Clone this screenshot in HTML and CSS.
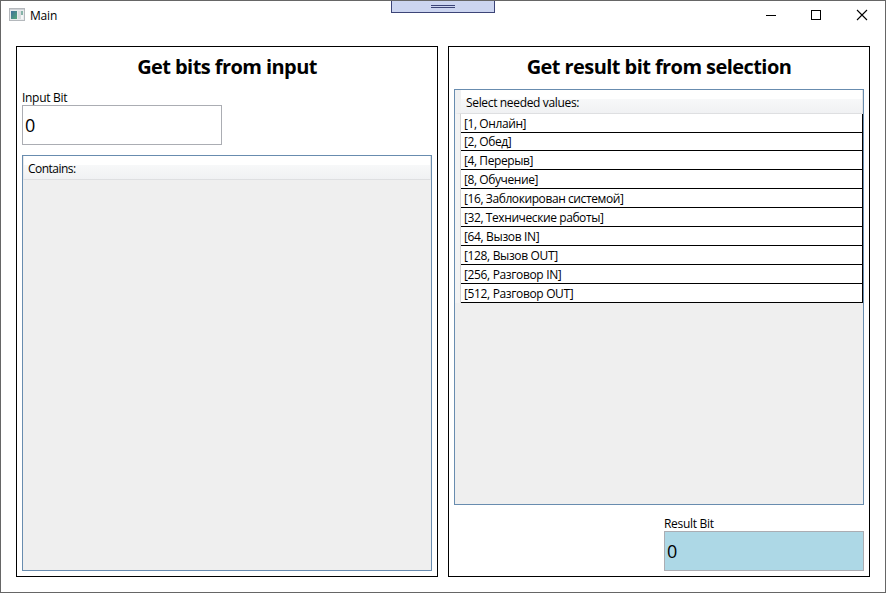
FILE: index.html
```html
<!DOCTYPE html>
<html lang="en">
<head>
<meta charset="utf-8">
<title>Main</title>
<link rel="stylesheet" href="styles.css">
</head>
<body>
<div class="window">
  <div class="debug-bar"><span class="grip"></span></div>
  <header class="titlebar">
    <svg class="app-icon" width="16" height="14" viewBox="0 0 16 14" shape-rendering="crispEdges">
      <defs><linearGradient id="screen" x1="0" y1="0" x2="1" y2="1"><stop offset="0" stop-color="#3f6f9c"/><stop offset="1" stop-color="#55a878"/></linearGradient></defs>
      <rect x=".5" y=".5" width="15" height="12" fill="#e9ebed" stroke="#b4b8bc"/>
      <rect x="1" y="1" width="14" height="1" fill="#cfd2d6"/>
      <rect x="2" y="3" width="6" height="8" fill="url(#screen)"/>
      <rect x="9" y="3" width="3" height="8" fill="#d9dcdf"/>
      <rect x="12" y="3" width="2" height="4" fill="#86b3a8"/>
      <rect x="12" y="7" width="2" height="4" fill="#f5f6f7"/>
    </svg>
    <span class="title">Main</span>
    <div class="controls">
      <svg width="46" height="28" viewBox="0 0 46 28"><path d="M18 14.500h10" stroke="#000" shape-rendering="crispEdges"/></svg>
      <svg width="46" height="28" viewBox="0 0 46 28"><path d="M17.500 9.500h9v9h-9z" fill="none" stroke="#000" shape-rendering="crispEdges"/></svg>
      <svg width="46" height="28" viewBox="0 0 46 28"><path d="M17 9l10 10M27 9l-10 10" fill="none" stroke="#000" stroke-width="1.1"/></svg>
    </div>
  </header>
  <main class="panels">
    <section class="panel">
      <h1><span class="heading-input">Get bits from input</span></h1>
      <label class="field">
        <span class="caption">Input Bit</span>
        <span class="box">0</span>
      </label>
      <div class="grid grid-contains">
        <div class="grid-header"><span class="text-contains">Contains:</span></div>
      </div>
    </section>
    <section class="panel">
      <h1><span class="heading-result">Get result bit from selection</span></h1>
      <div class="grid grid-values">
        <div class="grid-header with-rows"><span class="text-select">Select needed values:</span></div>
        <div class="row"><span>[1, Онлайн]</span></div>
        <div class="row short"><span>[2, Обед]</span></div>
        <div class="row"><span>[4, Перерыв]</span></div>
        <div class="row"><span>[8, Обучение]</span></div>
        <div class="row"><span>[16, Заблокирован системой]</span></div>
        <div class="row"><span>[32, Технические работы]</span></div>
        <div class="row mixed"><span>[64, Вызов IN]</span></div>
        <div class="row mixed"><span>[128, Вызов OUT]</span></div>
        <div class="row mixed"><span>[256, Разговор IN]</span></div>
        <div class="row mixed"><span>[512, Разговор OUT]</span></div>
      </div>
      <label class="field result">
        <span class="caption">Result Bit</span>
        <span class="box">0</span>
      </label>
    </section>
  </main>
</div>
</body>
</html>
```
FILE: styles.css
```css
* { box-sizing: border-box; }
body {
  margin: 0;
  font: 12px/16px "Segoe UI", "Open Sans", "Noto Sans", sans-serif;
  color: #000;
}
.window {
  position: relative;
  width: 886px;
  height: 593px;
  border: 1px solid #666;
  background: #fff;
  overflow: hidden;
}
.debug-bar {
  position: absolute;
  top: -1px;
  left: 390px;
  width: 104px;
  height: 14px;
  border: 1px solid #3c4477;
  background: #ccd5f0;
  display: flex;
  justify-content: center;
  padding-top: 5px;
}
.grip {
  width: 24px;
  height: 3px;
  border-top: 1px solid #3c4477;
  border-bottom: 1px solid #3c4477;
}
.debug-bar { height: 13px; padding-top: 4px; }
.titlebar { display: flex; height: 45px; padding-left: 8px; }
.app-icon { margin-top: 7px; }
.title { margin: 7px 0 0 5px; letter-spacing: -.2px; }
.controls { display: flex; margin-left: auto; margin-right: -1px; }
.panels { display: flex; gap: 10px; padding-left: 15px; }
.panel {
  width: 422px;
  height: 531px;
  border: 1px solid #000;
  padding: 5px;
  display: flex;
  flex-direction: column;
}
h1 {
  margin: 0;
  height: 37px;
  font-size: 20px;
  line-height: 30px;
  font-weight: 700;
  text-align: center;
  white-space: nowrap;
}
.heading-input, .heading-result { letter-spacing: -.57px; }
.field { display: flex; flex-direction: column; width: 200px; margin-top: 1px; }
.caption { height: 15px; line-height: 15px; letter-spacing: -.3px; }
.box {
  height: 40px;
  border: 1px solid #abadb3;
  padding-left: 2px;
  font-size: 18px;
  line-height: 39px;
}
.result { align-self: flex-end; margin-top: 11px; }
.result .box { background: #add8e6; }
.grid { border: 1px solid #688caf; background: #efefef; }
.grid-contains { height: 416px; margin-top: 10px; }
.grid-values { height: 416px; }
.grid-header {
  height: 24px;
  padding: 5px 0 0 4px;
  border-left: 1px solid #e8e9ea;
  border-right: 1px solid #e2e3e4;
  border-bottom: 1px solid #dedfe1;
  background: linear-gradient(#fff 0 9px, #f7f8f9 9px, #f0f1f3 23px);
}
.grid-header.with-rows { padding-left: 5px; border-left: 6px solid #f0f1f2; }
.text-contains { letter-spacing: -.52px; }
.text-select { letter-spacing: -.34px; }
.row {
  height: 19px;
  border-left: 6px solid #f3f3f3;
  background: #fff;
}
.row span {
  display: block;
  height: 19px;
  padding-left: 3px;
  line-height: 19px;
  border-right: 1px solid #000;
  border-bottom: 1px solid #000;
  box-shadow: -1px 0 #d5d5d5;
  letter-spacing: -.41px;
}
.row.mixed span { letter-spacing: -.35px; }
.row.short, .row.short span { height: 18px; line-height: 18px; }
```
